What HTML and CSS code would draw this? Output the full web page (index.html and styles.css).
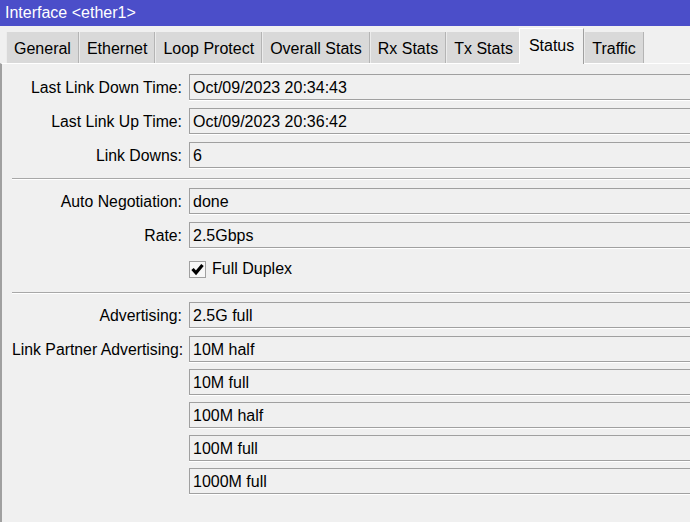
FILE: index.html
```html
<!DOCTYPE html>
<html lang="en">
<head>
  <meta charset="UTF-8" />
  <title>Interface &lt;ether1&gt;</title>
  <link rel="stylesheet" href="styles.css">
</head>
<body>

<div id="window">
  <div class="titlebar">Interface &lt;ether1&gt;</div>

  <div class="tabs">
    <div class="tab">General</div>
    <div class="tab">Ethernet</div>
    <div class="tab">Loop Protect</div>
    <div class="tab">Overall Stats</div>
    <div class="tab">Rx Stats</div>
    <div class="tab">Tx Stats</div>
    <div class="tab active">Status</div>
    <div class="tab">Traffic</div>
  </div>

  <div class="panel">
    <div class="group">
      <div class="row"><label>Last Link Down Time:</label><div class="field">Oct/09/2023 20:34:43</div></div>
      <div class="row"><label>Last Link Up Time:</label><div class="field">Oct/09/2023 20:36:42</div></div>
      <div class="row"><label>Link Downs:</label><div class="field">6</div></div>
    </div>

    <div class="sep"></div>

    <div class="group">
      <div class="row"><label>Auto Negotiation:</label><div class="field">done</div></div>
      <div class="row"><label>Rate:</label><div class="field">2.5Gbps</div></div>
      <div class="row">
        <label></label>
        <div class="check">
          <span class="box">
            <svg width="15" height="15" viewBox="0 0 15 15">
              <polyline points="2.5,7 6,10.8 12.5,3" fill="none" stroke="#000" stroke-width="3.2" />
            </svg>
          </span>
          <span>Full Duplex</span>
        </div>
      </div>
    </div>

    <div class="sep"></div>

    <div class="group">
      <div class="row"><label>Advertising:</label><div class="field">2.5G full</div></div>
    </div>

    <div class="group list">
      <div class="row"><label>Link Partner Advertising:</label><div class="field">10M half</div></div>
      <div class="row"><label></label><div class="field">10M full</div></div>
      <div class="row"><label></label><div class="field">100M half</div></div>
      <div class="row"><label></label><div class="field">100M full</div></div>
      <div class="row"><label></label><div class="field">1000M full</div></div>
    </div>
  </div>
</div>

</body>
</html>
```

FILE: styles.css
```css
body {
  margin: 0;
  background: #f0f0f0;
  font-family: "Liberation Sans", Arial, sans-serif;
  font-size: 16px;
  color: #000;
  overflow: hidden;
}

#window {
  width: 740px;
}

.titlebar {
  height: 26px;
  line-height: 26px;
  padding-left: 5px;
  background: #4b4ec9;
  color: #fff;
}

/* tab strip */
.tabs {
  display: flex;
  align-items: flex-end;
  height: 37px;
  padding-left: 6px;
  position: relative;
  z-index: 1;
}

.tab {
  height: 31px;
  line-height: 33px;
  padding: 0 7px;
  background: #d9d9d9;
  border-left: 1px solid #ececec;
  border-right: 1px solid #b4b4b4;
  white-space: nowrap;
  overflow: hidden;
}

.tab.active {
  height: 35px;
  line-height: 33px;
  margin: 0 0 -1px -2px;
  padding: 0 9px;
  background: #f0f0f0;
  border-top: 1px solid #fff;
  border-left: 1px solid #fff;
  border-right: 1px solid #a0a0a0;
  position: relative;
}

/* page body */
.panel {
  border-top: 1px solid #fff;
  border-left: 2px solid #a0a0a0;
  padding: 10px 0 40px 10px;
}

.group {
  display: flex;
  flex-direction: column;
  gap: 8px;
}

.group.list {
  margin-top: 8px;
  gap: 7px;
}

.row {
  display: grid;
  grid-template-columns: 171px 1fr;
  column-gap: 6px;
  align-items: center;
  height: 26px;
}

label {
  text-align: right;
  white-space: nowrap;
  padding: 2px 1px 0 0;
  font-size: 15.8px;
}

.field {
  height: 26px;
  line-height: 24px;
  box-sizing: border-box;
  padding: 1px 0 0 3px;
  border: 1px solid #a0a0a0;
  border-right: none;
  box-shadow: 0 1px 0 #fff;
  background: #f0f0f0;
  white-space: nowrap;
}

.check {
  display: flex;
  align-items: center;
  gap: 6px;
}

.box {
  width: 15px;
  height: 15px;
  border: 1px solid #a0a0a0;
  background: #f7f7f7;
  display: flex;
}

.sep {
  height: 1px;
  background: #a8a8a8;
  border-bottom: 1px solid #fff;
  margin: 10px 0 8px;
}
```
